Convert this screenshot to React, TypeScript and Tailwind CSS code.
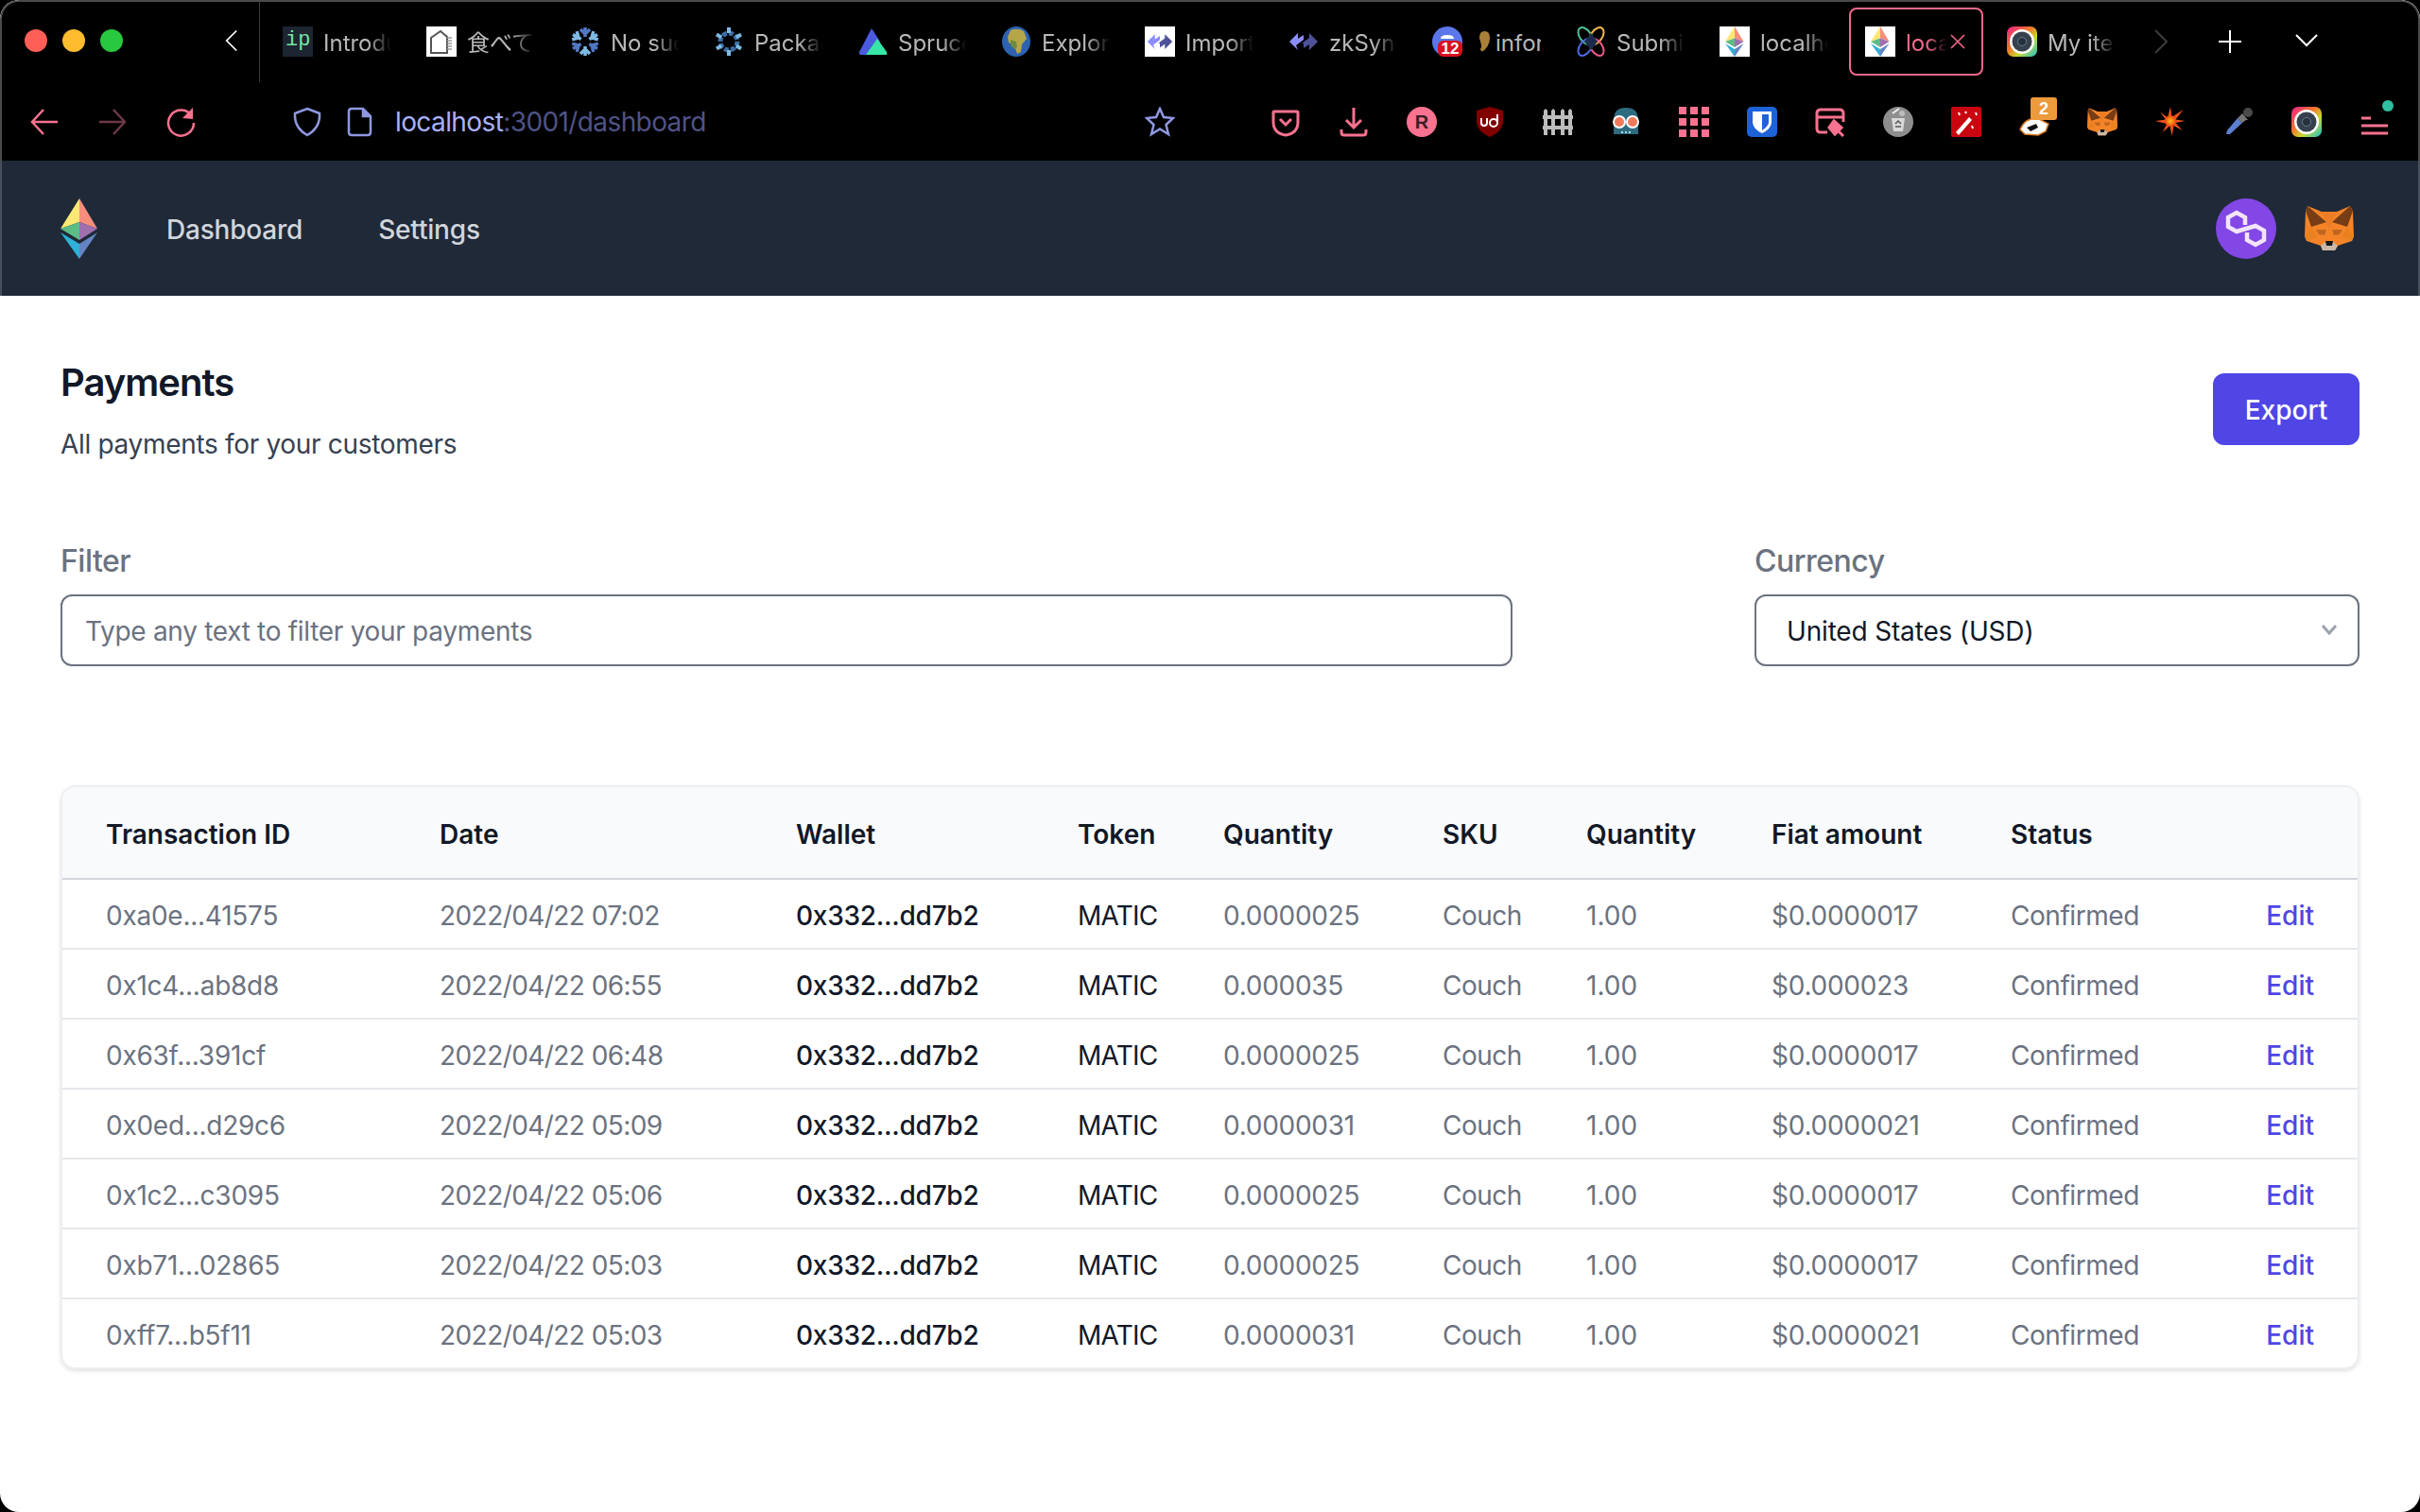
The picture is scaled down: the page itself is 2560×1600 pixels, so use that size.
import React from "react";

const payments = [
  { id: "0xa0e...41575", date: "2022/04/22 07:02", qty: "0.0000025", fiat: "$0.0000017" },
  { id: "0x1c4...ab8d8", date: "2022/04/22 06:55", qty: "0.000035", fiat: "$0.000023" },
  { id: "0x63f...391cf", date: "2022/04/22 06:48", qty: "0.0000025", fiat: "$0.0000017" },
  { id: "0x0ed...d29c6", date: "2022/04/22 05:09", qty: "0.0000031", fiat: "$0.0000021" },
  { id: "0x1c2...c3095", date: "2022/04/22 05:06", qty: "0.0000025", fiat: "$0.0000017" },
  { id: "0xb71...02865", date: "2022/04/22 05:03", qty: "0.0000025", fiat: "$0.0000017" },
  { id: "0xff7...b5f11", date: "2022/04/22 05:03", qty: "0.0000031", fiat: "$0.0000021" },
];

const EthLogo = ({ className }: { className: string }) => (
  <svg viewBox="0 0 40 64" className={className}>
    <polygon points="20,0 39,32 20,25" fill="#f68e7c" />
    <polygon points="20,0 0,32 20,25" fill="#fde873" />
    <polygon points="20,25 0,32 20,44" fill="#5dbb85" />
    <polygon points="20,25 39,32 20,44" fill="#a06fb0" />
    <polygon points="0,36 20,48 20,64" fill="#2fb0d8" />
    <polygon points="39,36 20,48 20,64" fill="#6484c4" />
  </svg>
);

const Arrows = ({ className }: { className: string }) => (
  <svg viewBox="0 0 32 32" className={className}>
    <polygon points="1,16 10,7 10,13 16,9 16,14 8,20 10,25" fill="#8c8dfc" />
    <polygon points="31,16 22,7 22,12 14,18 16,18 16,23 22,19 22,25" fill="#4e529a" />
  </svg>
);

const Lens = () => (
  <svg viewBox="0 0 32 32" className="size-8">
    <defs>
      <linearGradient id="lensBg" x1="0" y1="0" x2="1" y2="1">
        <stop offset="0" stopColor="#e91e8c" />
        <stop offset="0.4" stopColor="#f5732a" />
        <stop offset="0.65" stopColor="#c6d92f" />
        <stop offset="1" stopColor="#19c2d8" />
      </linearGradient>
    </defs>
    <rect width="32" height="32" rx="7" fill="url(#lensBg)" />
    <circle cx="16" cy="16" r="13" fill="#fff" />
    <circle cx="16" cy="16" r="10.5" fill="#37414d" />
    <circle cx="16" cy="16" r="4.5" fill="#26303b" stroke="#5d7a93" strokeWidth="1" />
  </svg>
);

const Fox = ({ className }: { className: string }) => (
  <svg viewBox="0 0 52 48" className={className}>
    <polygon points="3,0 18,6 34,6 48,0 51,5 52,32 50,37 35,42 32,47 19,47 17,42 2,37 0,32 1,5" fill="#f58428" />
    <polygon points="3,0 23,17 7,22 1,5" fill="#763d16" />
    <polygon points="48,0 29,17 45,22 51,5" fill="#763d16" />
    <polygon points="18,6 34,6 29,17 26,24 23,17" fill="#ec7d26" />
    <polygon points="12,25 23,25 21,31 15,30" fill="#c0671f" />
    <polygon points="40,25 29,25 31,31 37,30" fill="#c0671f" />
    <polygon points="0,32 7,22 13,33 2,37" fill="#e8821e" />
    <polygon points="52,32 45,22 39,33 50,37" fill="#e8821e" />
    <polygon points="17,42 22,38 30,38 35,42 32,47 19,47" fill="#c9b8aa" />
    <polygon points="22,37 30,37 29,42 23,42" fill="#161616" />
  </svg>
);

const Snowflake = () => (
  <svg viewBox="0 0 32 32" className="size-8" fill="none" strokeWidth="3.500">
    {[0, 60, 120, 180, 240, 300].map((a) => (
      <g key={a} transform={`rotate(${a} 16 16)`} stroke={a % 120 === 0 ? "#5277c3" : "#7ebae4"}>
        <path d="M16 11V1M11 3l5 5 5-5" />
      </g>
    ))}
  </svg>
);

const Gear = () => (
  <svg viewBox="0 0 32 32" className="size-8" fill="none">
    <circle cx="16" cy="16" r="9" stroke="#3b6ea5" strokeWidth="5" strokeDasharray="5 2" />
    {[0, 60, 120, 180, 240, 300].map((a) => (
      <path key={a} transform={`rotate(${a} 16 16)`} d="M16 7V1" stroke="#7ebae4" strokeWidth="4" />
    ))}
  </svg>
);

const favicons: Record<string, React.ReactNode> = {
  ip: (
    <svg viewBox="0 0 32 32" className="size-8">
      <rect width="32" height="32" fill="#1c2530" />
      <text x="3" y="20" fontFamily="Liberation Mono, monospace" fontSize="22" fill="#74e6a4">ip</text>
    </svg>
  ),
  house: (
    <svg viewBox="0 0 32 32" className="size-8" fill="none">
      <rect width="32" height="32" fill="#fff" />
      <path d="M5 28V12L15 5l7 6v17z" stroke="#555" strokeWidth="2" />
      <path d="M22 12h5M22 15h5M22 18h5M22 21h5M22 24h5" stroke="#999" strokeWidth="1.5" />
    </svg>
  ),
  nix: <Snowflake />,
  gear: <Gear />,
  spruce: (
    <svg viewBox="0 0 32 32" className="size-8">
      <path d="M15 2 2 27q-1 3 2 3h12l8-14z" fill="#4a5be0" />
      <path d="M21 13 9 30h21q2 0 1-3z" fill="#37e6a4" />
    </svg>
  ),
  globe: (
    <svg viewBox="0 0 32 32" className="size-8">
      <ellipse cx="16" cy="16" rx="15" ry="16" fill="#2d62b0" />
      <path d="M10 4q8-3 14 1l3 8-5 6-1 8-4 2-3-9-6-3-1-6z" fill="#b6a64a" />
      <path d="M10 14l6 2 1 6-3 2-4-4z" fill="#6f8a3e" />
    </svg>
  ),
  importz: (
    <div className="flex size-8 items-center justify-center bg-white">
      <Arrows className="size-7" />
    </div>
  ),
  zk: <Arrows className="size-8" />,
  notif: (
    <div className="relative size-8">
      <svg viewBox="0 0 32 32" className="size-8">
        <circle cx="16" cy="16" r="16" fill="#5a76e8" />
        <path d="M9 13q0-4 7-4t7 4z" fill="#fff" />
      </svg>
      <span className="absolute right-0 bottom-0 h-[17px] w-[26px] rounded-[6px] bg-[#d9101f] text-center font-['Liberation_Sans',sans-serif] text-[17px] leading-[17px] font-bold text-white">
        12
      </span>
    </div>
  ),
  submit: (
    <svg viewBox="0 0 32 32" className="size-8" fill="none" strokeWidth="2">
      <ellipse cx="10" cy="10" rx="6" ry="10" transform="rotate(-35 10 10)" stroke="#4fbf93" />
      <ellipse cx="22" cy="10" rx="6" ry="10" transform="rotate(35 22 10)" stroke="#eeb84a" />
      <ellipse cx="10" cy="22" rx="6" ry="10" transform="rotate(35 10 22)" stroke="#5068e0" />
      <ellipse cx="22" cy="22" rx="6" ry="10" transform="rotate(-35 22 22)" stroke="#ec5a8a" />
      <polygon points="16,7 23,16 16,25 9,16" fill="#1c2b4d" />
    </svg>
  ),
  eth: (
    <div className="flex size-8 items-center justify-center bg-white">
      <EthLogo className="h-8 w-5" />
    </div>
  ),
  lens: <Lens />,
};

const tabs = [
  { icon: "ip", label: "Introduction" },
  { icon: "house", label: "食べて" },
  { icon: "nix", label: "No such" },
  { icon: "gear", label: "Packages" },
  { icon: "spruce", label: "Spruce" },
  { icon: "globe", label: "Explorer" },
  { icon: "importz", label: "Import" },
  { icon: "zk", label: "zkSync" },
  { icon: "notif", label: "infor" },
  { icon: "submit", label: "Submit" },
  { icon: "eth", label: "localhost" },
  { icon: "eth", label: "localhost", active: true },
  { icon: "lens", label: "My items" },
];

const Tab = ({ icon, label, active }: { icon: string; label: string; active?: boolean }) => (
  <div
    className={`flex h-[72px] w-[142px] shrink-0 items-center rounded-[8px] pl-[15px] ${
      active ? "border-2 border-[#f0698a] pl-[13px]" : ""
    }`}
  >
    {favicons[icon]}
    {icon === "notif" && (
      <svg viewBox="0 0 14 26" className="ml-[17px] h-[24px] w-[13px] shrink-0">
        <path d="M7 1q6 0 6 8 0 6-3 10t-5 5-3-3q2-1 1-5T1 9q0-8 6-8z" fill="#a8803a" />
      </svg>
    )}
    <span
      className={`overflow-hidden pt-[3px] font-['Inter','Noto_Sans_CJK_JP',sans-serif] text-[24px] whitespace-nowrap ${
        active
          ? "ml-[11px] w-[44px] text-[#f0698a] [mask-image:linear-gradient(to_right,black_50%,transparent)]"
          : icon === "notif"
            ? "ml-[5px] w-[48px] text-[#b8b8b8]"
            : "ml-[11px] w-[72px] text-[#b8b8b8] [mask-image:linear-gradient(to_right,black_65%,transparent)]"
      }`}
    >
      {label}
    </span>
    {active && (
      <svg viewBox="0 0 20 20" className="ml-[1px] size-5 shrink-0" stroke="#f0698a" strokeWidth="1.6">
        <path d="M3 3l14 14M17 3L3 17" />
      </svg>
    )}
  </div>
);

const pink = "#f9728f";

const toolbarIcons: React.ReactNode[] = [
  <svg viewBox="0 0 32 32" fill="none" stroke={pink} strokeWidth="3" className="size-8">
    <path d="M4 5h24a1 1 0 0 1 1 1v10q0 12-13 14Q3 28 3 16V6a1 1 0 0 1 1-1z" />
    <path d="M10 13l6 6 6-6" />
  </svg>,
  <svg viewBox="0 0 32 32" fill="none" stroke={pink} strokeWidth="3" className="size-8">
    <path d="M16 1v20M8 14l8 8 8-8M3 24v3q0 3 3 3h20q3 0 3-3v-3" />
  </svg>,
  <svg viewBox="0 0 32 32" className="size-8">
    <circle cx="16" cy="16" r="16" fill={pink} />
    <text x="16" y="23" textAnchor="middle" fontFamily="Liberation Sans, sans-serif" fontWeight="700" fontSize="20" fill="#3a1d26">R</text>
  </svg>,
  <svg viewBox="0 0 32 32" className="size-8">
    <path d="M16 0l14 4v13q-2 10-14 15Q4 27 2 17V4z" fill="#800000" />
    <path d="M7 12v5q0 3 3 3t3-3v-5M24 8v9a4 4 0 1 1-8 0 4 4 0 1 1 8 0" fill="none" stroke="#fff" strokeWidth="2" />
  </svg>,
  <svg viewBox="0 0 32 32" className="size-8" fill="#bdbdbd">
    <path d="M1 4l2-2 2 2v26H1zM9 4l2-2 2 2v26H9zM19 4l2-2 2 2v26h-4zM27 4l2-2 2 2v26h-4z" />
    <rect x="0" y="9" width="32" height="4" />
    <rect x="0" y="20" width="32" height="4" />
  </svg>,
  <svg viewBox="0 0 32 32" className="size-8">
    <path d="M3 29V14Q3 1 16 1t13 13v15z" fill="#2f6b80" />
    <circle cx="9" cy="16" r="6" fill="#f07a5a" stroke="#fff" strokeWidth="2" />
    <circle cx="23" cy="16" r="6" fill="#f07a5a" stroke="#fff" strokeWidth="2" />
    <path d="M11 27h2M15 27h2M19 27h2" stroke="#a9d6e0" strokeWidth="2" />
  </svg>,
  <div className="grid size-8 grid-cols-3 gap-[4px]">
    {Array.from({ length: 9 }).map((_, i) => (
      <span key={i} className="bg-[#f9728f]" />
    ))}
  </div>,
  <svg viewBox="0 0 32 32" className="size-8">
    <rect width="32" height="32" rx="5" fill="#1c62d9" />
    <path d="M6 5h20v12q-1 7-10 11Q7 24 6 17z" fill="#fff" />
    <path d="M16 8h7v9q-1 4-7 8z" fill="#1c62d9" />
  </svg>,
  <svg viewBox="0 0 32 32" fill="none" stroke={pink} strokeWidth="3" className="size-8">
    <path d="M13 27H6q-4 0-4-4V7q0-4 4-4h20q4 0 4 4v9M2 11h28" />
    <path d="M20 15l8 7-7 7-6-7z" fill={pink} />
    <path d="M25 26l5 5" />
  </svg>,
  <svg viewBox="0 0 32 32" className="size-8">
    <circle cx="16" cy="16" r="16" fill="#8e8e8e" />
    <path d="M9 12h14l-2 14H11z" fill="#d9d9d9" />
    <path d="M13 18l3-3 3 3M13 21h6" stroke="#555" strokeWidth="1.5" fill="none" />
    <path d="M10 7l7-5" stroke="#eee" strokeWidth="2" />
    <circle cx="20" cy="7" r="3" fill="#bdbdbd" />
  </svg>,
  <svg viewBox="0 0 32 32" className="size-8">
    <rect width="32" height="32" rx="2" fill="#c9060f" />
    <path d="M5 27L19 11l3 3L8 30z" fill="#fff" />
    <path d="M8 6l1 3M26 6l1 3M22 20l1 3M15 5l1 2" stroke="#fff" strokeWidth="2" />
  </svg>,
  <div className="relative size-8">
    <svg viewBox="0 0 32 32" className="size-8">
      <path d="M1 24Q6 12 19 12l12 6-3 8-8 4-14-1z" fill="#fff" stroke="#d97a1c" strokeWidth="1.5" />
      <path d="M8 22l10-4 2 4-8 4z" fill="#111" />
    </svg>
    <span className="absolute -top-[10px] left-[12px] h-[24px] w-[28px] rounded-[3px] bg-[#ec9a3c] text-center font-['Liberation_Sans',sans-serif] text-[18px] leading-[24px] font-bold text-white">
      2
    </span>
  </div>,
  <Fox className="size-8" />,
  <svg viewBox="0 0 32 32" className="size-8">
    <defs>
      <radialGradient id="spark">
        <stop offset="0" stopColor="#ffc21a" />
        <stop offset="1" stopColor="#ef3c12" />
      </radialGradient>
    </defs>
    <path d="M16 0l1.500 11 12-8-8 10.500 10 1.500-10 2 7 8-9-5-2 11-2-11-8 7 5-9L0 15l11-1.500-6-8 8 6z" fill="#f2521a" />
    <circle cx="16" cy="15" r="6" fill="url(#spark)" />
  </svg>,
  <svg viewBox="0 0 32 32" className="size-8" fill="none">
    <path d="M3 29l1-4L15 12l5 5L7 29z" fill="#5c7fd1" />
    <path d="M15 12l5 5 4-3 2 0-6-7z" fill="#777" />
    <circle cx="26" cy="6" r="5" fill="#4a4a4a" />
  </svg>,
  <Lens />,
  <div className="relative size-8">
    <svg viewBox="0 0 32 32" className="size-8" stroke={pink} strokeWidth="3">
      <path d="M2 12h10M2 20h28M2 28h28" />
    </svg>
    <span className="absolute -top-[7px] -right-[4px] size-3 rounded-full bg-[#2fc0a0]" />
  </div>,
];

const Toolbar = () => (
  <div className="h-[170px] rounded-t-[20px] border-x-2 border-t-2 border-[#4a4a4a] bg-black">
    <div className="flex h-[85px] items-start">
      <div className="flex h-[85px] w-[273px] shrink-0 items-center border-r border-[#3a3a3a] pb-[4px] pl-[24px]">
        <span className="size-6 rounded-full bg-[#ff5f57]" />
        <span className="ml-4 size-6 rounded-full bg-[#febc2e]" />
        <span className="ml-4 size-6 rounded-full bg-[#28c840]" />
        <svg viewBox="0 0 16 26" className="ml-[108px] h-[24px] w-[14px]" fill="none" stroke="#fff" strokeWidth="2">
          <path d="M14 1L2 13l12 12" />
        </svg>
      </div>
      <div className="mt-[6px] ml-[9px] flex gap-[10px]">
        {tabs.map((t, i) => (
          <Tab key={i} icon={t.icon} label={t.label} active={t.active} />
        ))}
      </div>
      <div className="mt-[6px] flex h-[72px] items-center">
        <svg viewBox="0 0 16 26" className="ml-[28px] h-[26px] w-4" fill="none" stroke="#3c3c3c" strokeWidth="2">
          <path d="M2 1l12 12L2 25" />
        </svg>
        <svg viewBox="0 0 24 24" className="ml-[53px] size-6" stroke="#fff" strokeWidth="2">
          <path d="M12 0v24M0 12h24" />
        </svg>
        <svg viewBox="0 0 24 14" className="mb-[2px] ml-[57px] h-[14px] w-6" fill="none" stroke="#fff" strokeWidth="2">
          <path d="M1 1l11 11L23 1" />
        </svg>
      </div>
    </div>
    <div className="flex h-[83px] items-center pl-[9px]">
      <div className="flex w-[72px] justify-center">
        <svg viewBox="0 0 32 32" className="size-8" fill="none" stroke={pink} strokeWidth="2.5">
          <path d="M30 16H3M15 3L3 16l12 13" />
        </svg>
      </div>
      <div className="flex w-[72px] justify-center">
        <svg viewBox="0 0 32 32" className="size-8" fill="none" stroke="#6d3848" strokeWidth="2.5">
          <path d="M2 16h27M17 3l12 13-12 13" />
        </svg>
      </div>
      <div className="flex w-[72px] justify-center">
        <svg viewBox="0 0 32 32" className="size-8" fill="none" stroke={pink} strokeWidth="2.5">
          <path d="M28 10A13.5 13.5 0 1 0 30 17" />
          <polygon points="29,1 29,13 18,12" fill={pink} stroke="none" />
        </svg>
      </div>
      <svg viewBox="0 0 32 32" className="ml-[82px] size-8" fill="none" stroke="#8e97e0" strokeWidth="2.5">
        <path d="M16 2l13 5q1 15-13 23Q2 22 3 7z" />
      </svg>
      <svg viewBox="0 0 32 32" className="ml-[24px] size-8" fill="none" stroke="#8e97e0" strokeWidth="2.5">
        <path d="M7 2h12l8 8v17q0 3-3 3H7q-3 0-3-3V5q0-3 3-3z" />
        <path d="M19 2v8h8" fill="#8e97e0" />
      </svg>
      <div className="ml-[21px] w-[793px] text-[28px] tracking-[-0.6px] text-[#a9b1ff]">
        localhost<span className="text-[#4f5386]">:3001/dashboard</span>
      </div>
      <svg viewBox="0 0 32 32" className="size-8" fill="none" stroke="#8e97e0" strokeWidth="2.5">
        <path d="M16 2l4 9 10 1-7.5 7 2.5 10-9-5.500-9 5.500 2.500-10L2 12l10-1z" />
      </svg>
      <div className="ml-[81px] flex">
        {toolbarIcons.map((icon, i) => (
          <div key={i} className="flex w-[72px] justify-center">
            {icon}
          </div>
        ))}
      </div>
    </div>
  </div>
);

const Nav = () => (
  <div className="flex h-[143px] items-center border-x-2 border-[#46505c] bg-[#1f2937] pr-[64px] pl-[62px]">
    <EthLogo className="h-[64px] w-[40px]" />
    <a className="ml-[72px] pt-[3px] text-[28px] font-medium tracking-[-0.2px] text-[#d1d5db]">Dashboard</a>
    <a className="ml-[80px] pt-[3px] text-[28px] font-medium tracking-[-0.2px] text-[#d1d5db]">Settings</a>
    <div className="ml-auto flex items-center">
      <svg viewBox="0 0 64 64" className="size-16">
        <circle cx="32" cy="32" r="32" fill="#8247e5" />
        <path
          d="M31 28V20L22 15 13 20V30L22 35 42 29 51 34V44L42 49 33 44V36"
          fill="none"
          stroke="#f3e4fb"
          strokeWidth="4.500"
        />
      </svg>
      <Fox className="mr-[4px] ml-[30px] h-[48px] w-[52px]" />
    </div>
  </div>
);

const headers = [
  { label: "Transaction ID", cls: "w-[375px] pl-[46px]" },
  { label: "Date", cls: "w-[377px] pl-[24px]" },
  { label: "Wallet", cls: "w-[298px] pl-[24px]" },
  { label: "Token", cls: "w-[154px] pl-[24px]" },
  { label: "Quantity", cls: "w-[232px] pl-[24px]" },
  { label: "SKU", cls: "w-[152px] pl-[24px]" },
  { label: "Quantity", cls: "w-[196px] pl-[24px]" },
  { label: "Fiat amount", cls: "w-[253px] pl-[24px]" },
  { label: "Status", cls: "pl-[24px]" },
  { label: "", cls: "w-[120px]" },
];

export default function App() {
  return (
    <div className="h-[1600px] w-[2560px] overflow-hidden bg-black font-['Inter',sans-serif]">
      <div className="h-full overflow-hidden rounded-[20px] bg-white">
        <Toolbar />
        <Nav />
        <main className="px-[64px]">
          <div className="flex items-center justify-between pt-[64px]">
            <div>
              <h1 className="text-[40px] leading-[56px] font-semibold tracking-[-1px] text-[#111827]">Payments</h1>
              <p className="mt-[17px] text-[28px] leading-[40px] tracking-[-0.32px] text-[#374151]">
                All payments for your customers
              </p>
            </div>
            <button className="mb-[2px] h-[76px] w-[155px] rounded-[12px] bg-[#4f46e5] pt-[2px] text-[28px] font-medium text-white">
              Export
            </button>
          </div>
          <div className="mt-[84px] flex justify-between">
            <div className="w-[1536px]">
              <label className="block text-[32px] leading-[40px] font-medium tracking-[-0.5px] text-[#6b7280]">
                Filter
              </label>
              <input
                placeholder="Type any text to filter your payments"
                className="mt-[15px] h-[76px] w-full rounded-[12px] border-2 border-[#6b7280] px-[24px] pt-[2px] text-[28px] tracking-[-0.3px] placeholder:text-[#6b7280]"
              />
            </div>
            <div className="w-[640px]">
              <label className="block text-[32px] leading-[40px] font-medium tracking-[-0.5px] text-[#6b7280]">
                Currency
              </label>
              <div className="relative mt-[15px]">
                <select
                  defaultValue="usd"
                  className="h-[76px] w-full appearance-none rounded-[12px] border-2 border-[#6b7280] bg-white pt-[2px] pl-[32px] text-[28px] tracking-[-0.17px] text-[#111827]"
                >
                  <option value="usd">United States (USD)</option>
                </select>
                <svg
                  viewBox="0 0 16 12"
                  className="absolute top-[31px] right-[24px] h-3 w-4"
                  fill="none"
                  stroke="#9ca3af"
                  strokeWidth="3"
                >
                  <path d="M1 2l7 8 7-8" />
                </svg>
              </div>
            </div>
          </div>
          <div className="mt-[126px] overflow-hidden rounded-[16px] border-2 border-[#eceef1] shadow-[0_2px_4px_rgba(0,0,0,0.12)]">
            <table className="w-full table-fixed border-collapse text-left text-[28px] leading-[40px]">
              <thead className="bg-[#f9fafb]">
                <tr className="border-b-2 border-[#d1d5db]">
                  {headers.map((h, i) => (
                    <th key={i} className={`pt-[30px] pb-[26px] font-semibold text-[#111827] ${h.cls}`}>
                      {h.label}
                    </th>
                  ))}
                </tr>
              </thead>
              <tbody>
                {payments.map((p, i) => (
                  <tr key={p.id} className={i < payments.length - 1 ? "border-b-2 border-[#e5e7eb]" : ""}>
                    <td className="pt-[18px] pb-[14px] pl-[46px] tracking-[-0.25px] whitespace-nowrap text-[#6b7280]">{p.id}</td>
                    <td className="pt-[18px] pb-[14px] pl-[24px] tracking-[-0.56px] whitespace-nowrap text-[#6b7280]">{p.date}</td>
                    <td className="pt-[18px] pb-[14px] pl-[24px] font-medium tracking-[-0.25px] text-[#111827]">0x332...dd7b2</td>
                    <td className="pt-[18px] pb-[14px] pl-[24px] tracking-[-0.8px] text-[#111827]">MATIC</td>
                    <td className="pt-[18px] pb-[14px] pl-[24px] tracking-[-0.27px] text-[#6b7280]">{p.qty}</td>
                    <td className="pt-[18px] pb-[14px] pl-[24px] tracking-[-0.5px] text-[#6b7280]">Couch</td>
                    <td className="pt-[18px] pb-[14px] pl-[24px] text-[#6b7280]">1.00</td>
                    <td className="pt-[18px] pb-[14px] pl-[24px] tracking-[-0.25px] text-[#6b7280]">{p.fiat}</td>
                    <td className="pt-[18px] pb-[14px] pl-[24px] tracking-[-0.45px] text-[#6b7280]">Confirmed</td>
                    <td className="pt-[18px] pr-[46px] pb-[14px] text-right font-medium text-[#4f46e5]">Edit</td>
                  </tr>
                ))}
              </tbody>
            </table>
          </div>
        </main>
      </div>
    </div>
  );
}
